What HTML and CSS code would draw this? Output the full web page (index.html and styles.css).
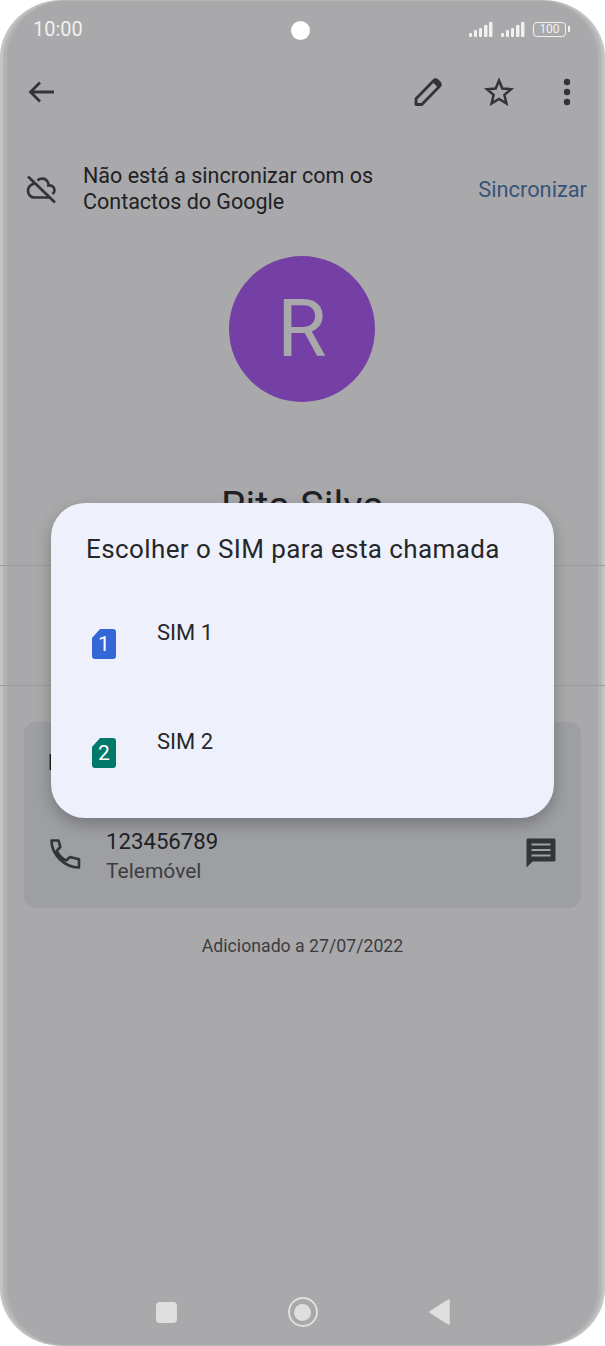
FILE: index.html
```html
<!DOCTYPE html>
<html lang="pt">
<head>
    <meta charset="UTF-8">
    <meta name="viewport" content="width=device-width, initial-scale=1.0">
    <title>Contacto</title>
    <link rel="stylesheet" href="styles.css">
</head>
<body>
    <div class="phone">
        <div class="status-bar">
            <span class="status-time">10:00</span>
            <div class="status-icons">
                <svg width="24" height="15" viewBox="0 0 24 15"><g fill="#f0f0f0"><rect x="0" y="11" width="3" height="4" rx="1"/><rect x="5" y="8" width="3" height="7" rx="1"/><rect x="10" y="6" width="3" height="9" rx="1"/><rect x="15" y="3" width="3.500" height="12" rx="1"/><rect x="20" y="0" width="3.500" height="15" rx="1"/></g></svg>
                <svg width="24" height="15" viewBox="0 0 24 15"><g fill="#f0f0f0"><rect x="0" y="11" width="3" height="4" rx="1"/><rect x="5" y="8" width="3" height="7" rx="1"/><rect x="10" y="6" width="3" height="9" rx="1"/><rect x="15" y="3" width="3.500" height="12" rx="1"/><rect x="20" y="0" width="3.500" height="15" rx="1"/></g></svg>
                <div class="battery">100</div>
            </div>
        </div>

        <div class="toolbar">
            <svg width="32" height="32" viewBox="0 0 32 32"><path d="M29 16H6M15 6.500 5.500 16l9.500 9.500" fill="none" stroke="#333438" stroke-width="2.800"/></svg>
            <div class="toolbar-actions">
                <svg width="32" height="32" viewBox="0 0 32 32"><path d="M4 28.500v-5.800L21.800 4.400a2.400 2.400 0 0 1 3.400 0l2.400 2.400a2.400 2.400 0 0 1 0 3.400L9.800 28.500z" fill="none" stroke="#333438" stroke-width="2.800" stroke-linejoin="round"/><path d="M20.500 6l5.500 5.500 2.500-3-.5-3-2-2-2.500.200z" fill="#333438"/></svg>
                <svg width="32" height="32" viewBox="0 0 32 32"><path d="M16 4.500l3.300 8 8.700.7-6.600 5.700 2 8.500L16 22.900l-7.400 4.500 2-8.500L4 13.200l8.700-.7z" fill="none" stroke="#333438" stroke-width="2.500"/></svg>
                <svg class="more-icon" width="8" height="32" viewBox="0 0 8 32"><g fill="#333438"><circle cx="4" cy="6" r="3.200"/><circle cx="4" cy="16" r="3.200"/><circle cx="4" cy="26" r="3.200"/></g></svg>
            </div>
        </div>

        <div class="sync-row">
            <svg class="sync-icon" width="32" height="32" viewBox="0 0 32 32"><path d="M9.500 10.500C5.500 11.500 3 14.500 3 18c0 3.800 3 6.500 6.500 6.500H24M12.500 7.500c2-2 8-3.500 10.500 2 .5 1 .5 2 .5 3 3-.5 6 1.500 6 4.500 0 1.500-.5 3-2 4" fill="none" stroke="#333438" stroke-width="2.700"/><path d="M3 3.500l27 26" stroke="#333438" stroke-width="2.700"/></svg>
            <p class="sync-text">Não está a sincronizar com os<br>Contactos do Google</p>
            <span class="sync-link">Sincronizar</span>
        </div>

        <div class="avatar">R</div>
        <h1 class="contact-name">Rita Silva</h1>
        <div class="action-row"></div>

        <section class="card">
            <h2 class="card-title">D</h2>
            <div class="card-row">
                <svg class="phone-icon" width="34" height="34" viewBox="0 0 34 34"><path d="M3.500 3.500h7l1.800 6.500-3.600 3.800c2 4.500 5 7.500 9.500 9.700l3.800-3.500 9 2.200v8.300C16.500 30.500 3.500 17.500 3.500 3.500z" fill="none" stroke="#333438" stroke-width="2.600" stroke-linejoin="round"/></svg>
                <div class="card-number">
                    <div class="number">123456789</div>
                    <div class="number-type">Telemóvel</div>
                </div>
                <svg class="message-icon" width="32" height="32" viewBox="0 0 32 32"><path d="M3 1.500h26a1.500 1.500 0 0 1 1.500 1.500v20a1.500 1.500 0 0 1-1.500 1.500H7.500L1.500 30.500V3A1.500 1.500 0 0 1 3 1.500z" fill="#333438"/><path d="M6.500 7.500h19M6.500 13h19M6.500 18.500h19" stroke="#a0a1a5" stroke-width="2.200"/></svg>
            </div>
        </section>

        <p class="added-date">Adicionado a 27/07/2022</p>

        <div class="nav-bar">
            <div class="nav-square"></div>
            <div class="nav-home"><div class="nav-home-dot"></div></div>
            <svg width="22" height="26" viewBox="0 0 22 26"><path d="M20 1v24L1 13z" fill="#dedede" stroke="#dedede" stroke-width="1.500" stroke-linejoin="round"/></svg>
        </div>

        <div class="camera"></div>

        <div class="dialog">
            <h2 class="dialog-title">Escolher o SIM para esta chamada</h2>
            <div class="sim-row">
                <div class="sim-card sim-blue">1</div>
                <span class="sim-name">SIM 1</span>
            </div>
            <div class="sim-row">
                <div class="sim-card sim-green">2</div>
                <span class="sim-name">SIM 2</span>
            </div>
        </div>
    </div>
</body>
</html>
```

FILE: styles.css
```css
html, body {
    margin: 0;
    background: white;
    font-family: Roboto, "Liberation Sans", sans-serif;
}
.phone {
    position: relative;
    width: 605px;
    height: 1346px;
    overflow: hidden;
    display: flex;
    flex-direction: column;
    background: #a9a9ab;
    border-radius: 62px / 58px;
    box-shadow: inset 3px 0 2px rgba(255, 255, 255, 0.25), inset 7px 0 1px rgba(255, 255, 255, 0.12), inset -3px 0 2px rgba(255, 255, 255, 0.25), inset -7px 0 1px rgba(255, 255, 255, 0.12);
}
.status-bar {
    display: flex;
    justify-content: space-between;
    align-items: center;
    height: 58px;
    padding: 0 39px 0 33px;
    color: #f0f0f0;
}
.status-time {
    font-size: 20px;
}
.status-icons {
    display: flex;
    align-items: center;
    gap: 8px;
}
.battery {
    position: relative;
    box-sizing: border-box;
    width: 33px;
    height: 15px;
    border: 1.500px solid #f0f0f0;
    border-radius: 4px;
    text-align: center;
    font-size: 12px;
    line-height: 12px;
}
.battery::after {
    content: "";
    position: absolute;
    right: -5px;
    top: 3px;
    width: 2px;
    height: 6px;
    background: #f0f0f0;
}
.toolbar {
    display: flex;
    justify-content: space-between;
    align-items: center;
    height: 68px;
    padding: 0 34px 0 25px;
}
.toolbar-actions {
    display: flex;
    align-items: center;
    gap: 39px;
}
.more-icon {
    margin-left: 9px;
}
.sync-row {
    display: flex;
    align-items: center;
    height: 52px;
    margin-top: 37px;
    padding: 0 18px 0 25px;
}
.sync-icon {
    flex: none;
}
.sync-text {
    flex: 1;
    margin: 0 0 0 26px;
    font-size: 21.500px;
    line-height: 26px;
    color: #202124;
}
.sync-link {
    font-size: 21.800px;
    color: #38537a;
}
.avatar {
    align-self: center;
    width: 146px;
    height: 146px;
    margin: 41px 1px 0 0;
    border-radius: 50%;
    background: #7540a6;
    color: #a9a9ab;
    font-size: 80px;
    line-height: 146px;
    text-align: center;
}
.contact-name {
    margin: 80px 0 0;
    height: 83px;
    font-size: 40px;
    font-weight: 400;
    line-height: 50px;
    text-align: center;
    color: #202124;
}
.action-row {
    height: 119px;
    border-top: 1px solid #9b9b9e;
    border-bottom: 1px solid #9b9b9e;
}
.card {
    margin: 36px 24px 0;
    height: 186px;
    border-radius: 12px;
    background: #9e9fa3;
}
.card-title {
    margin: 0;
    padding: 28px 0 0 24px;
    font-size: 22px;
    font-weight: 500;
    line-height: 26px;
    color: #202124;
}
.card-row {
    display: flex;
    align-items: flex-start;
    margin-top: 50px;
    padding: 0 24px;
}
.phone-icon {
    flex: none;
    margin-top: 11px;
}
.message-icon {
    flex: none;
    margin-top: 11px;
}
.card-number {
    flex: 1;
    margin-left: 24px;
}
.number {
    font-size: 22.200px;
    line-height: 30px;
    color: #202124;
}
.number-type {
    font-size: 21px;
    line-height: 31px;
    color: #3c3d40;
}
.added-date {
    margin: 26px 0 0;
    font-size: 17.700px;
    line-height: 24px;
    text-align: center;
    color: #3c3d40;
}
.nav-bar {
    display: flex;
    justify-content: center;
    align-items: center;
    gap: 111px;
    margin-top: auto;
    height: 68px;
    padding: 0 0 0 1px;
}
.nav-square {
    width: 21px;
    height: 21px;
    border-radius: 4px;
    background: #dedede;
}
.nav-home {
    display: flex;
    justify-content: center;
    align-items: center;
    box-sizing: border-box;
    width: 30px;
    height: 30px;
    border: 2.500px solid #dedede;
    border-radius: 50%;
}
.nav-home-dot {
    width: 17px;
    height: 17px;
    border-radius: 50%;
    background: #dedede;
}
.camera {
    position: absolute;
    left: 291px;
    top: 21px;
    width: 19px;
    height: 19px;
    border-radius: 50%;
    background: white;
}
.dialog {
    position: absolute;
    left: 51px;
    top: 503px;
    box-sizing: border-box;
    width: 503px;
    height: 315px;
    padding: 30px 35px;
    border-radius: 34px;
    background: #eef1fb;
    box-shadow: 0 6px 16px rgba(0, 0, 0, 0.25);
}
.dialog-title {
    margin: 0 0 28px;
    font-size: 26px;
    font-weight: 400;
    letter-spacing: 0.400px;
    line-height: 32px;
    color: #26272b;
}
.sim-row {
    display: flex;
    height: 109px;
}
.sim-card {
    flex: none;
    width: 24px;
    height: 30px;
    margin: 36px 0 0 6px;
    border-radius: 3px;
    clip-path: polygon(8px 0, 100% 0, 100% 100%, 0 100%, 0 9px);
    color: white;
    font-size: 21px;
    line-height: 31px;
    text-align: center;
}
.sim-blue {
    background: #3367d6;
}
.sim-green {
    background: #00796b;
}
.sim-name {
    margin: 25px 0 0 41px;
    font-size: 22px;
    line-height: 30px;
    color: #26272b;
}
```
